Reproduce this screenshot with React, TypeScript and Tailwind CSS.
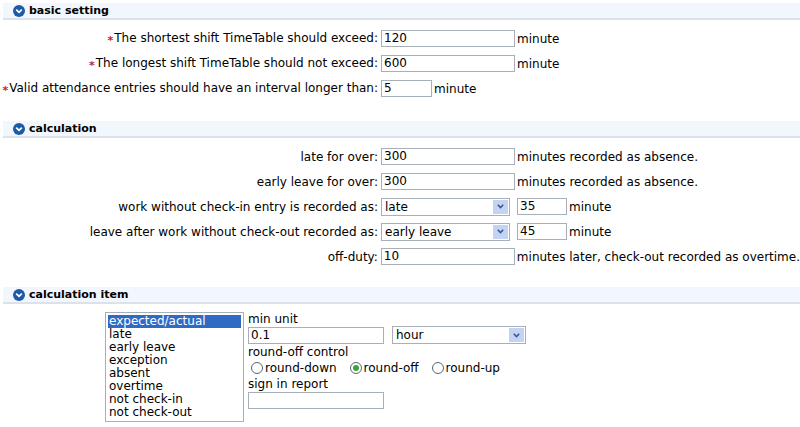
import React from "react";

const font = { fontFamily: '"DejaVu Sans", Verdana, sans-serif' };

function Chevron() {
  return (
    <span className="inline-flex items-center justify-center w-[12px] h-[12px] rounded-full bg-[#1d5aa8]">
      <svg width="8" height="8" viewBox="0 0 8 8">
        <path d="M1.2 2.6 L4 5.4 L6.8 2.6" stroke="white" strokeWidth="1.7" fill="none" />
      </svg>
    </span>
  );
}

function Header({ title }: { title: string }) {
  return (
    <div className="ml-[3px] h-[17px] flex items-center gap-[4px] pl-[10px] bg-[#f2f6fd] border-b-2 border-[#dde2ea]">
      <Chevron />
      <span className="text-[11px] font-bold text-black leading-none">{title}</span>
    </div>
  );
}

function Input({ w, value }: { w: number; value?: string }) {
  return (
    <div
      className="h-[17px] border border-[#a7b0b8] bg-white px-[2px] text-[12px] leading-[15px] text-black"
      style={{ width: w }}
    >
      {value}
    </div>
  );
}

function Select({ w, value }: { w: number; value: string }) {
  return (
    <div
      className="h-[18px] border border-[#a7b0b8] bg-white flex items-center justify-between pl-[3px] pr-[1px] text-[12px] text-black"
      style={{ width: w }}
    >
      <span>{value}</span>
      <span className="w-[15px] h-[14px] bg-[#c3d3f3] flex items-center justify-center">
        <svg width="7" height="5" viewBox="0 0 7 5">
          <path d="M0.8 0.8 L3.5 3.6 L6.2 0.8" stroke="#3a5488" strokeWidth="1.5" fill="none" />
        </svg>
      </span>
    </div>
  );
}

function Star() {
  return <span className="text-[#c0282a] text-[11px] font-bold relative top-[2px] mr-[1px]">*</span>;
}

function Row({ label, star, children }: { label: string; star?: boolean; children: React.ReactNode }) {
  return (
    <div className="flex items-center h-[25px]">
      <div className="w-[378px] text-right text-[12px] text-black whitespace-nowrap">
        {star && <Star />}
        {label}
      </div>
      <div className="ml-[3px] flex items-center text-[12px] text-black whitespace-nowrap">{children}</div>
    </div>
  );
}

function Radio({ checked, label }: { checked?: boolean; label: string }) {
  return (
    <span className="inline-flex items-center gap-[2px] mr-[13px]">
      <span className="w-[12px] h-[12px] rounded-full border border-[#5a6673] bg-white flex items-center justify-center">
        {checked && <span className="w-[6px] h-[6px] rounded-full bg-[#3aa53a]" />}
      </span>
      <span>{label}</span>
    </span>
  );
}

export default function App() {
  const items = [
    "expected/actual",
    "late",
    "early leave",
    "exception",
    "absent",
    "overtime",
    "not check-in",
    "not check-out",
  ];
  return (
    <div className="w-[800px] h-[427px] bg-white overflow-hidden pt-[3px]" style={font}>
      <Header title="basic setting" />
      <div className="pt-[6px]">
        <Row label="The shortest shift TimeTable should exceed:" star>
          <Input w={134} value="120" />
          <span className="ml-[2px]">minute</span>
        </Row>
        <Row label="The longest shift TimeTable should not exceed:" star>
          <Input w={134} value="600" />
          <span className="ml-[2px]">minute</span>
        </Row>
        <Row label="Valid attendance entries should have an interval longer than:" star>
          <Input w={51} value="5" />
          <span className="ml-[2px]">minute</span>
        </Row>
      </div>
      <div className="mt-[20px]">
        <Header title="calculation" />
      </div>
      <div className="pt-[6px]">
        <Row label="late for over:">
          <Input w={134} value="300" />
          <span className="ml-[2px]">minutes recorded as absence.</span>
        </Row>
        <Row label="early leave for over:">
          <Input w={134} value="300" />
          <span className="ml-[2px]">minutes recorded as absence.</span>
        </Row>
        <Row label="work without check-in entry is recorded as:">
          <Select w={129} value="late" />
          <span className="ml-[7px]"><Input w={50} value="35" /></span>
          <span className="ml-[2px]">minute</span>
        </Row>
        <Row label="leave after work without check-out recorded as:">
          <Select w={129} value="early leave" />
          <span className="ml-[7px]"><Input w={50} value="45" /></span>
          <span className="ml-[2px]">minute</span>
        </Row>
        <Row label="off-duty:">
          <Input w={134} value="10" />
          <span className="ml-[2px]">minutes later, check-out recorded as overtime.</span>
        </Row>
      </div>
      <div className="mt-[18px]">
        <Header title="calculation item" />
      </div>
      <div className="flex pt-[8px] pl-[105px]">
        <div className="w-[139px] h-[110px] border border-[#a7b0b8] bg-white p-[2px] text-[12px] leading-[13px] text-black">
          {items.map((it, i) => (
            <div key={it} className={i === 0 ? "bg-[#316ac5] text-white pl-[1px]" : "pl-[1px]"}>
              {it}
            </div>
          ))}
        </div>
        <div className="ml-[4px] text-[12px] text-black leading-[16px]">
          <div className="leading-[14px]">min unit</div>
          <div className="flex items-center gap-[8px]">
            <Input w={136} value="0.1" />
            <Select w={134} value="hour" />
          </div>
          <div className="leading-[16px]">round-off control</div>
          <div className="flex items-center h-[16px] pl-[3px]">
            <Radio label="round-down" />
            <Radio checked label="round-off" />
            <Radio label="round-up" />
          </div>
          <div className="leading-[16px]">sign in report</div>
          <Input w={136} />
        </div>
      </div>
    </div>
  );
}
